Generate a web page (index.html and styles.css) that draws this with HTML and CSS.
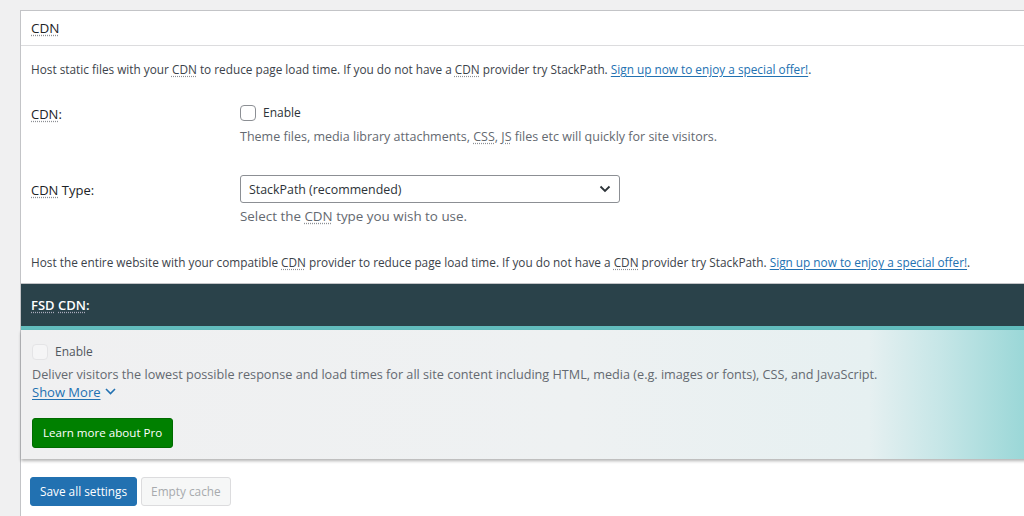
FILE: index.html
```html
<!DOCTYPE html>
<html>
<head>
<meta charset="utf-8">
<link rel="stylesheet" href="styles.css">
</head>
<body>
<div class="panel">
  <div class="panel-head"><abbr>CDN</abbr></div>
  <div class="panel-body">
    <p class="intro">Host static files with your <abbr>CDN</abbr> to reduce page load time. If you do not have a <abbr>CDN</abbr> provider try StackPath. <a href="#">Sign up now to enjoy a special offer!</a>.</p>
    <div class="row row-cdn">
      <div class="label"><abbr>CDN</abbr>:</div>
      <div class="field">
        <label class="check"><span class="box"></span>Enable</label>
        <div class="desc">Theme files, media library attachments, <abbr>CSS</abbr>, <abbr>JS</abbr> files etc will quickly for site visitors.</div>
      </div>
    </div>
    <div class="row row-type">
      <div class="label"><abbr>CDN</abbr> Type:</div>
      <div class="field">
        <div class="select">StackPath (recommended)
          <svg class="chev" width="12" height="8" viewBox="0 0 12 8"><path d="M1.5 1.5 L6 6 L10.5 1.5" fill="none" stroke="#2c3338" stroke-width="1.8"/></svg>
        </div>
        <div class="desc desc2">Select the <abbr>CDN</abbr> type you wish to use.</div>
      </div>
    </div>
    <p class="intro2">Host the entire website with your compatible <abbr>CDN</abbr> provider to reduce page load time. If you do not have a <abbr>CDN</abbr> provider try StackPath. <a href="#">Sign up now to enjoy a special offer!</a>.</p>
  </div>
  <div class="fsd-head"><abbr>FSD</abbr> <abbr>CDN</abbr>:</div>
  <div class="fsd-body">
    <label class="check faded"><span class="box light"></span>Enable</label>
    <div class="fsd-desc">Deliver visitors the lowest possible response and load times for all site content including HTML, media (e.g. images or fonts), CSS, and JavaScript.</div>
    <a class="more" href="#">Show More <svg width="11" height="7" viewBox="0 0 11 7"><path d="M1 1 L5.5 5.5 L10 1" fill="none" stroke="#2271b1" stroke-width="1.6"/></svg></a>
    <div class="pro-wrap"><span class="btn-pro">Learn more about Pro</span></div>
  </div>
  <div class="actions">
    <span class="btn-save">Save all settings</span>
    <span class="btn-empty">Empty cache</span>
  </div>
</div>
</body>
</html>
```
FILE: styles.css
```css
html, body { margin: 0; padding: 0; }
body {
  background: #f0f0f1;
  font-family: "Open Sans", "Noto Sans", sans-serif;
  font-size: 12.5px;
  color: #3c434a;
  overflow: hidden;
  height: 516px;
  padding: 10px 0 0 20px;
  box-sizing: border-box;
}
abbr {
  text-decoration: underline dotted;
  text-decoration-color: #8c8f94;
  text-underline-offset: 2px;
}
a { color: #2271b1; text-decoration: underline; text-underline-offset: 2px; }
.panel {
  background: #fff;
  border: 1px solid #c3c4c7;
  border-right: none;
  width: 1010px;
  height: 520px;
}
.panel-head {
  height: 34px;
  line-height: 34px;
  padding-left: 10px;
  font-size: 13.5px;
  color: #1d2327;
  border-bottom: 1px solid #dcdcde;
}
.panel-body { padding: 0 10px; }
.intro { margin: 13px 0 0; line-height: 20px; font-size: 11.8px; white-space: nowrap; }
.row { display: flex; }
.row-cdn { margin-top: 25px; }
.row-type { margin-top: 29px; }
.label {
  width: 209px;
  flex: none;
  color: #1d2327;
  font-size: 13px;
}
.row-cdn .label { padding-top: 1px; }
.row-type .label { padding-top: 6px; }
.check { display: flex; align-items: center; gap: 7px; font-size: 12px; color: #2c3338; }
.box {
  width: 14px; height: 14px;
  border: 1px solid #8c8f94;
  border-radius: 4px;
  background: #fff;
  display: inline-block;
}
.desc { margin-top: 7px; color: #646970; line-height: 18px; white-space: nowrap; }
.select {
  width: 362px;
  height: 26px;
  border: 1px solid #8c8f94;
  border-radius: 3px;
  display: flex;
  align-items: center;
  justify-content: space-between;
  padding: 0 8px 0 8px;
  font-size: 12.4px;
  color: #2c3338;
}
.desc2 { margin-top: 4px; font-size: 13.4px; }
.intro2 { margin: 27px 0 0; line-height: 20px; padding-bottom: 11px; font-size: 11.8px; white-space: nowrap; }
.fsd-head {
  background: #2a424a;
  color: #fff;
  height: 42px;
  line-height: 42px;
  padding-left: 10px;
  font-size: 13px;
  font-weight: 600;
  border-top: 1px solid #c3c4c7;
  border-bottom: 4px solid #62bcbd;
}
.fsd-head abbr { text-decoration-color: #aab; }
.fsd-body {
  height: 129px;
  box-sizing: border-box;
  padding: 13px 10px 0 11px;
  background: linear-gradient(to right, #f0f0f1 0%, #eef1f2 55%, #e6f0f1 84%, #c6e6e7 91%, #97d6d6 100%);
  box-shadow: 0 2px 3px rgba(0,0,0,0.3);
}
.check.faded { color: #50575e; }
.box.light { border-color: #e4e4e6; background: #f5f5f6; }
.fsd-desc { margin-top: 5px; color: #646970; line-height: 18px; font-size: 12.65px; white-space: nowrap; }
.more { display: inline-flex; align-items: center; gap: 4px; font-size: 13px; line-height: 19px; }
.more svg { margin-top: -3px; }
.pro-wrap { margin-top: 16px; }
.btn-pro {
  display: inline-block;
  background: #008000;
  color: #fff;
  border: 1px solid #006b00;
  border-radius: 3px;
  padding: 0 10px;
  height: 28px;
  line-height: 28px;
  font-size: 11.6px;
}
.actions { padding: 18px 9px 0; display: flex; gap: 4px; }
.btn-save, .btn-empty {
  display: inline-block;
  height: 27px;
  line-height: 27px;
  border-radius: 3px;
  padding: 0 9px;
  font-size: 11.8px;
}
.btn-save { background: #2271b1; color: #fff; border: 1px solid #2271b1; }
.btn-empty { background: #f6f7f7; color: #a7aaad; border: 1px solid #dcdcde; }
```
